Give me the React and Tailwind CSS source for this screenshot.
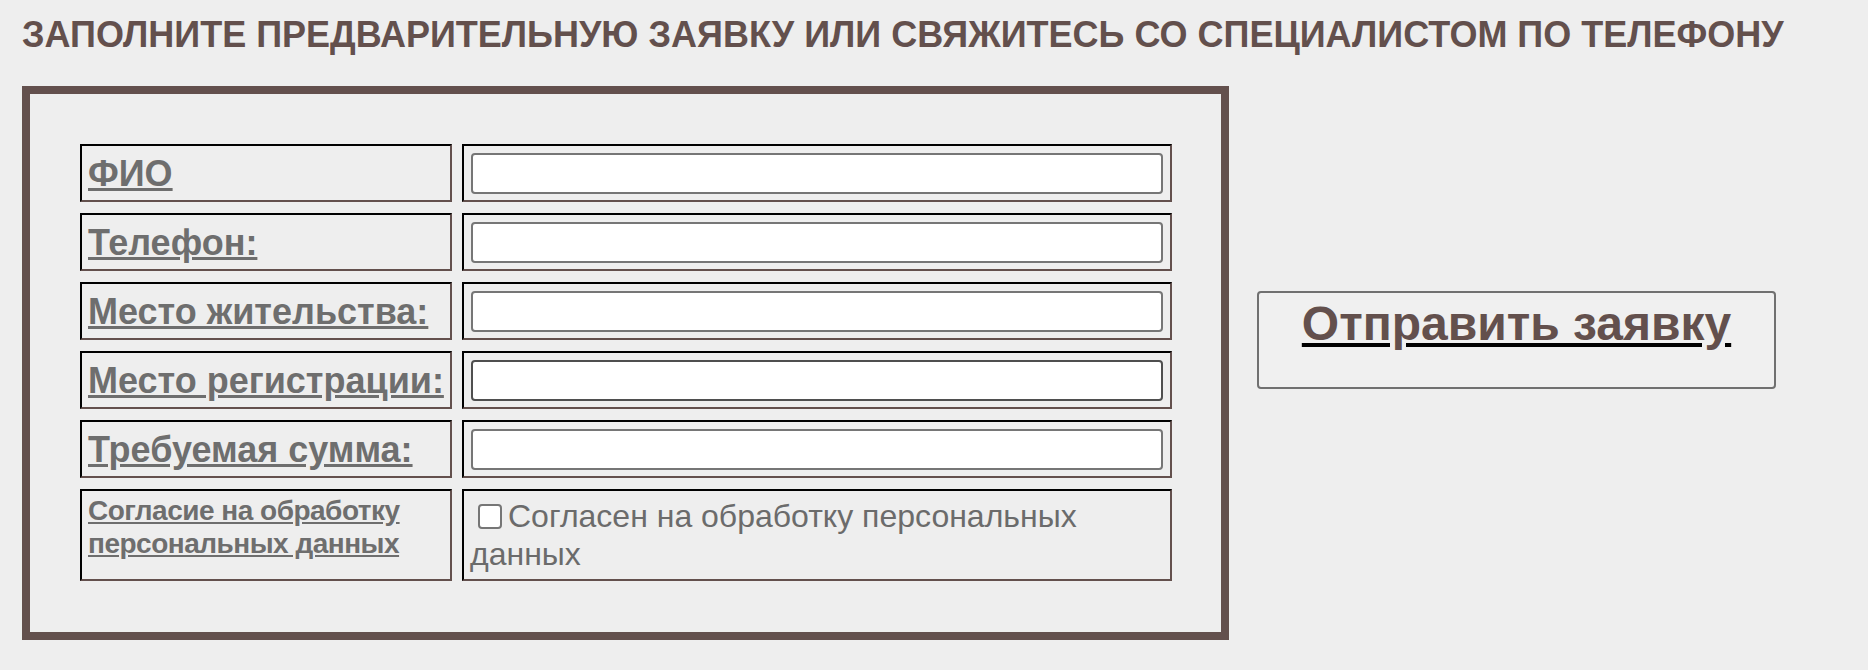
import React from "react";

const cellBorder =
  "border-2 border-t-black border-l-black border-r-[#63504d] border-b-[#63504d]";

function Row({ label, dark }) {
  return (
    <div className="flex gap-[10px]">
      <div className={`${cellBorder} w-[372px] h-[58px] flex items-center px-[6px]`}>
        <span className="text-[36px] leading-[41px] font-bold text-[#6e6e6e] underline whitespace-nowrap">
          {label}
        </span>
      </div>
      <div className={`${cellBorder} w-[710px] h-[58px] flex items-center px-[7px]`}>
        <input
          type="text"
          className={`w-full h-[41px] bg-white border-2 rounded-[4px] outline-none ${
            dark ? "border-[#4f4f4f]" : "border-[#767676]"
          }`}
        />
      </div>
    </div>
  );
}

export default function App() {
  return (
    <div className="min-h-[670px] bg-[#eeeeee] font-['Liberation_Sans',Arial,sans-serif] pt-[14px] pl-[22px]">
      <h1 className="text-[36px] leading-[41px] font-bold text-[#63504d] whitespace-nowrap">
        ЗАПОЛНИТЕ ПРЕДВАРИТЕЛЬНУЮ ЗАЯВКУ ИЛИ СВЯЖИТЕСЬ СО СПЕЦИАЛИСТОМ ПО ТЕЛЕФОНУ
      </h1>
      <div className="flex items-start mt-[31px]">
        <div className="w-[1207px] border-8 border-[#63504d] pt-[50px] pl-[50px] pb-[51px]">
          <div className="flex flex-col gap-[11px]">
            <Row label="ФИО" />
            <Row label="Телефон:" />
            <Row label="Место жительства:" />
            <Row label="Место регистрации:" dark />
            <Row label="Требуемая сумма:" />
            <div className="flex gap-[10px]">
              <div className={`${cellBorder} w-[372px] h-[92px] px-[6px] pt-[3px]`}>
                <span className="text-[28px] leading-[33px] font-bold tracking-[-0.5px] text-[#6e6e6e] underline">
                  Согласие на обработку
                  <br />
                  персональных данных
                </span>
              </div>
              <div className={`${cellBorder} w-[710px] h-[92px] p-[6px]`}>
                <label className="text-[32px] leading-[38px] text-[#6b6b6b]">
                  <input
                    type="checkbox"
                    className="appearance-none inline-block w-[24px] h-[25px] bg-white border-2 border-[#767676] rounded-[4px] align-[-2px] ml-[8px] mr-[6px]"
                  />
                  Согласен на обработку персональных данных
                </label>
              </div>
            </div>
          </div>
        </div>
        <div
          role="button"
          className="ml-[28px] mt-[205px] w-[519px] h-[98px] bg-[#f0f0f0] border-2 border-[#707070] rounded-[4px] pt-[3px] text-center"
        >
          <span className="text-[48px] leading-[55px] font-bold text-[#63504d] underline decoration-black">
            Отправить заявку
          </span>
        </div>
      </div>
    </div>
  );
}
